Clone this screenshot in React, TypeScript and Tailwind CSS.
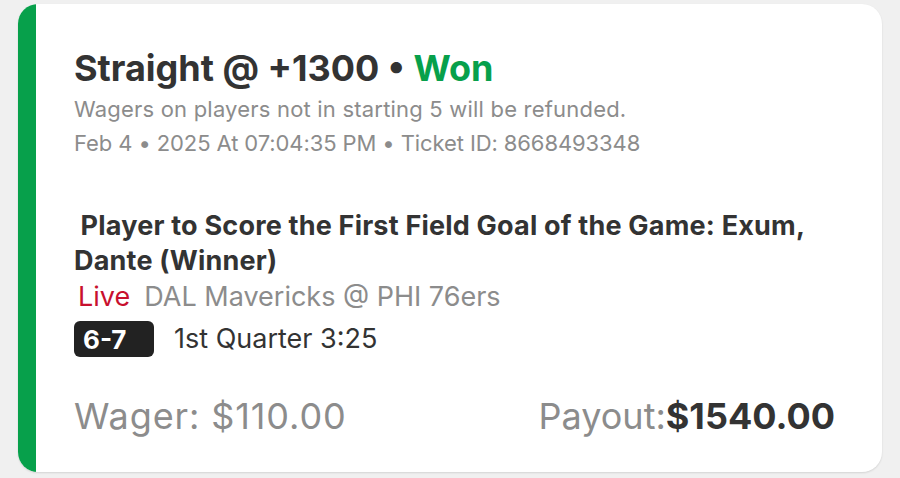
import React from 'react';

const font = { fontFamily: 'Inter, "Noto Sans", sans-serif' };

export default function App() {
  return (
    <div className="min-h-[478px] w-[900px] bg-[#f0f0f0] pt-[4px] pl-[18px] pr-[18px]" style={font}>
      <div className="flex h-[468px] overflow-hidden rounded-[20px] bg-white shadow-[0_1px_2px_rgba(0,0,0,0.12)]">
        <div className="w-[18px] shrink-0 bg-[#07a04b]" />
        <div className="flex flex-1 flex-col pl-[38px] pr-[47px] pt-[42px]">
          <h1 className="text-[36px] font-bold leading-[44px] text-[#333333]">
            Straight @ +1300 • <span className="text-[#07a04b]">Won</span>
          </h1>
          <p className="mt-[2px] text-[22px] leading-[34px] tracking-[0.2px] text-[#8c8c8c]">
            Wagers on players not in starting 5 will be refunded.
          </p>
          <p className="text-[22px] leading-[34px] tracking-[-0.1px] text-[#8c8c8c]">
            Feb 4 • 2025 At 07:04:35 PM • Ticket ID: 8668493348
          </p>

          <div className="mt-[48px]">
            <p className="text-[27px] font-bold leading-[35px] tracking-[0.2px] text-[#333333]">
              &nbsp;Player to Score the First Field Goal of the Game: Exum, Dante (Winner)
            </p>
            <div className="mt-[1px] flex items-center gap-[14px] text-[27px] leading-[36px]">
              <span className="pl-[4px] text-[#c8102e]">Live</span>
              <span className="text-[#8c8c8c]">DAL Mavericks @ PHI 76ers</span>
            </div>
            <div className="mt-[4px] flex items-center gap-[20px]">
              <span className="flex h-[36px] w-[80px] items-center rounded-[6px] bg-[#222222] pl-[9px] text-[26px] font-bold text-white">
                6-7
              </span>
              <span className="text-[27px] text-[#333333]">1st Quarter 3:25</span>
            </div>
          </div>

          <div className="mt-[29px] flex items-center justify-between">
            <span className="text-[36px] tracking-[0.9px] text-[#8c8c8c]">Wager: $110.00</span>
            <span className="text-[36px] text-[#8c8c8c]">
              Payout:<span className="font-bold text-[#333333]">$1540.00</span>
            </span>
          </div>
        </div>
      </div>
    </div>
  );
}
